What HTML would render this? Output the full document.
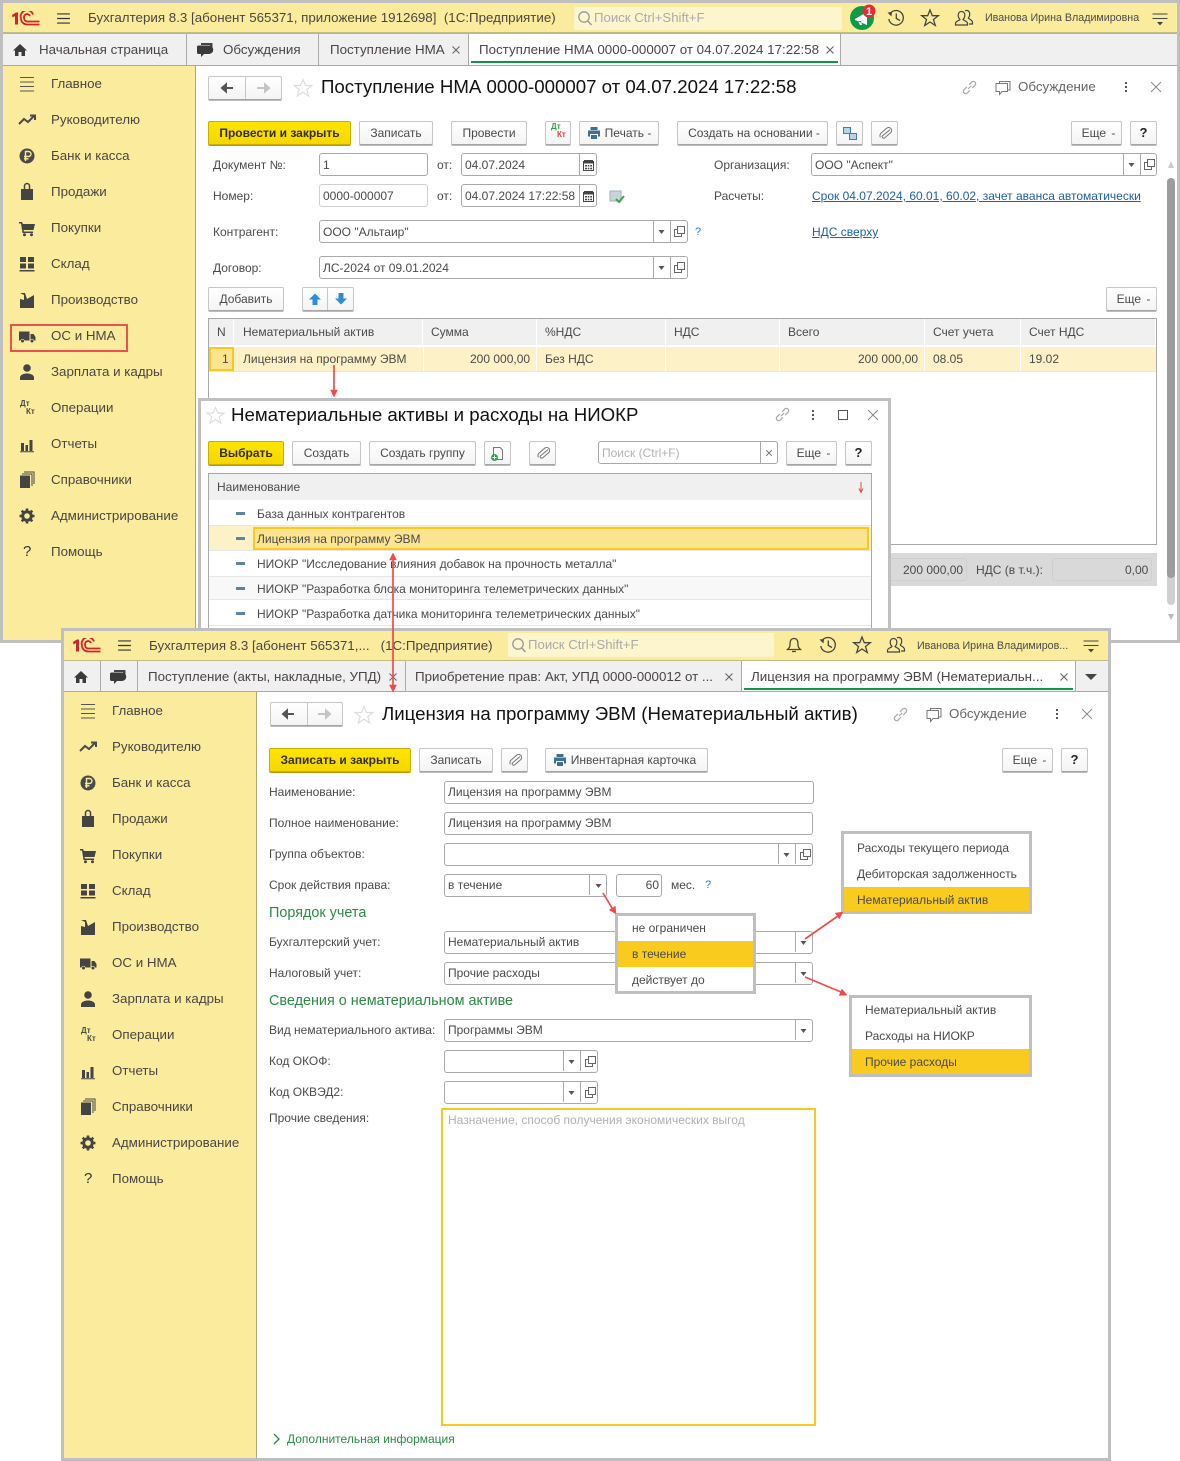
<!DOCTYPE html>
<html lang="ru"><head><meta charset="utf-8"><title>1С</title>
<style>
html,body{margin:0;padding:0;background:#fff}
#p{position:relative;width:1180px;height:1461px;overflow:hidden;font-family:"Liberation Sans",Arial,sans-serif;font-size:12px;color:#4a4a4a}
.l{position:absolute;left:0;top:0;width:1180px;height:1461px;pointer-events:none}
.r{position:absolute;box-sizing:border-box}
.t{position:absolute;white-space:pre;line-height:16px;height:16px}
.h{font-size:13.35px;color:#4a4444}
.ti{font-size:18.67px;color:#111;line-height:24px;height:24px}
.g{font-size:14.4px;color:#2b8a45}
.b{position:absolute;box-sizing:border-box;height:24px;border:1px solid #c6c6c6;border-bottom:1px solid #a5a5a5;border-radius:2px;background:linear-gradient(#fff,#f4f4f4);text-align:center;line-height:22px;color:#4a4a4a;white-space:pre;box-shadow:0 1px 0 #bbb}
.y{background:linear-gradient(#ffe500,#f5d700);border-color:#c9ad00;color:#332f00;font-weight:bold;box-shadow:0 1px 0 #b89e00}
.m{padding-left:4px;word-spacing:2px}
.i{position:absolute;box-sizing:border-box;height:23px;border:1px solid #a9a9a9;border-radius:3px;background:#fff;line-height:21px;padding-left:3px;color:#4a4a4a;white-space:pre}
.j{line-height:23px}
svg.l{overflow:visible}
a{color:#1d5ea8;text-decoration:underline}
</style></head><body><div id="p">
<svg width="0" height="0" style="position:absolute"><defs>
<symbol id="logo" viewBox="0 0 29 15"><path d="M1 4L5 1.500H7V13.500H4V5L1.500 6.500Z" fill="#d1232a"/><path d="M22 3.500A6 6 0 0 0 10 7.500A6 6 0 0 0 16 13.500H28.500" fill="none" stroke="#d1232a" stroke-width="1.800"/><path d="M19 5A3 3 0 0 0 13.200 7.500A3 3 0 0 0 16 10.500H28.500" fill="none" stroke="#d1232a" stroke-width="1.800"/></symbol>
<symbol id="ham" viewBox="0 0 16 12"><path d="M1 1H15M1 6H15M1 11H15" stroke="#333" stroke-width="1.300" fill="none"/></symbol>
<symbol id="m0" viewBox="0 0 20 20"><path d="M3 3.500H17M3 8H17M3 12.500H17M3 17H17" stroke="#555" fill="none"/></symbol>
<symbol id="m1" viewBox="0 0 20 20"><path d="M2 14L7 9L11 12L17 6M13 5.500H18V10" stroke="#4a4a4a" stroke-width="2" fill="none"/></symbol>
<symbol id="m2" viewBox="0 0 20 20"><circle cx="10" cy="10" r="7.500" fill="#4a4a4a"/><path d="M8.500 15V5.500H11.500A2.300 2.300 0 0 1 11.500 10.500H7M7 12.800H11.500" stroke="#fbec9d" stroke-width="1.400" fill="none"/></symbol>
<symbol id="m3" viewBox="0 0 20 20"><path d="M4 7H16V18H4Z" fill="#444"/><path d="M7.500 8V4A2.500 2.500 0 0 1 12.500 4V8" stroke="#444" stroke-width="1.500" fill="none"/></symbol>
<symbol id="m4" viewBox="0 0 20 20"><path d="M2 4H5L6 6H18L16.500 12H6.500L7 13.500H16V15H5.500L4 5.500H2Z" fill="#444"/><circle cx="7.500" cy="16.800" r="1.500" fill="#444"/><circle cx="14.500" cy="16.800" r="1.500" fill="#444"/></symbol>
<symbol id="m5" viewBox="0 0 20 20"><path d="M3 3H9V8H3ZM11 3H17V8H11ZM3 9.500H9V14.500H3ZM11 9.500H17V14.500H11ZM2.500 16H17.500V17.500H2.500Z" fill="#444"/></symbol>
<symbol id="m6" viewBox="0 0 20 20"><path d="M3 18V9L7 10V5L3 3H8L10 9L17 5V18Z" fill="#444"/></symbol>
<symbol id="m7" viewBox="0 0 20 20"><path d="M2 5.500H12.500V14.500H2ZM13.500 8H16.500L18.500 11V14.500H13.500Z" fill="#444"/><circle cx="5.500" cy="15" r="1.800" fill="#444" stroke="#fbec9d" stroke-width="0.600"/><circle cx="15" cy="15" r="1.800" fill="#444" stroke="#fbec9d" stroke-width="0.600"/></symbol>
<symbol id="m8" viewBox="0 0 20 20"><circle cx="10" cy="6" r="3.800" fill="#444"/><path d="M3 18V15.500C3 12.800 7 11.500 10 11.500S17 12.800 17 15.500V18Z" fill="#444"/></symbol>
<symbol id="m10" viewBox="0 0 20 20"><path d="M4 9H7V17H4ZM8.500 11H11V17H8.500ZM12.500 6H15.500V17H12.500ZM3 17.300H17V18.300H3Z" fill="#444"/></symbol>
<symbol id="m11" viewBox="0 0 20 20"><path d="M3 5.500H13V18H3Z" fill="#444"/><path d="M5 4H15V16M7 2H17V14" stroke="#444" fill="none"/></symbol>
<symbol id="m12" viewBox="0 0 20 20"><circle cx="10" cy="10" r="4.300" fill="none" stroke="#444" stroke-width="3"/><path d="M10 2.500V5M10 15V17.500M2.500 10H5M15 10H17.500M4.700 4.700L6.500 6.500M13.500 13.500L15.300 15.300M15.300 4.700L13.500 6.500M6.500 13.500L4.700 15.300" stroke="#444" stroke-width="2.600"/></symbol>
<symbol id="home" viewBox="0 0 16 16"><path d="M8 2L15 8.500H13V14H9.500V10H6.500V14H3V8.500H1Z" fill="#3a3a3a"/></symbol>
<symbol id="bub" viewBox="0 0 18 16"><path d="M5 1H16.500V10H14V3H5Z" fill="#444"/><path d="M2.500 3.500H13A1.500 1.500 0 0 1 13 12H8L5 15V12H2.500A1.500 1.500 0 0 1 1 10.500V5A1.500 1.500 0 0 1 2.500 3.500Z" fill="#3a3a3a"/></symbol>
<symbol id="x" viewBox="0 0 10 10"><path d="M1.500 1.500L8.500 8.500M8.500 1.500L1.500 8.500" stroke="#666" stroke-width="1.100" fill="none"/></symbol>
<symbol id="xl" viewBox="0 0 12 12"><path d="M1 1L11 11M11 1L1 11" stroke="#888" fill="none"/></symbol>
<symbol id="star" viewBox="0 0 20 20"><path d="M10 1.500L12.500 7.500H19L13.800 11.500L15.700 18L10 14.200L4.300 18L6.200 11.500L1 7.500H7.500Z" fill="#fff" stroke="#dedede" stroke-width="1.200"/></symbol>
<symbol id="star2" viewBox="0 0 20 20"><path d="M10 2L12.300 7.700H18.300L13.500 11.500L15.300 17.500L10 14L4.700 17.500L6.500 11.500L1.700 7.700H7.700Z" fill="none" stroke="#444" stroke-width="1.300"/></symbol>
<symbol id="hist" viewBox="0 0 20 20"><path d="M3.500 6.500A7.300 7.300 0 1 1 2.800 11M10.300 5.500V10.500L14 12.500" fill="none" stroke="#444" stroke-width="1.300"/><path d="M1.500 4.500L6 4L5.500 8.500Z" fill="#444"/></symbol>
<symbol id="usr" viewBox="0 0 20 20"><path d="M1.500 17V15.500C1.500 13 5 12.800 6 11.500C4.500 10 4 8.500 4.300 6.500C4.500 4.500 6 3.500 7.500 3.500S10.500 4.500 10.800 6.500C11 8.500 10.500 10 9 11.500C10 12.800 13.500 13 13.500 15.500V17Z" fill="none" stroke="#444" stroke-width="1.200"/><path d="M11 2.800C12 2.300 14.500 2 15.500 4.500C16 6.500 15.500 8.500 14.300 10C15.300 11.300 18.500 12 18.500 14.500V16H15" fill="none" stroke="#444" stroke-width="1.200"/></symbol>
<symbol id="hamt" viewBox="0 0 16 14"><path d="M0.500 1H15.500M0.500 5.500H15.500" stroke="#444" fill="none"/><path d="M5 9H11L8 12.500Z" fill="#444"/></symbol>
<symbol id="link" viewBox="0 0 16 16"><path d="M6.500 9.500L9.500 6.500M5.500 7.500L2.500 10.500A2.200 2.200 0 0 0 5.500 13.500L8.500 10.500M7.500 5.500L10.500 2.500A2.200 2.200 0 0 1 13.500 5.500L10.500 8.500" fill="none" stroke="#a9a9a9" stroke-width="1.100"/></symbol>
<symbol id="chat" viewBox="0 0 16 16"><path d="M4.500 3V1.500H15V10H12.500" fill="none" stroke="#777"/><path d="M1 3.500H12.500V11.500H7L4.500 14.500V11.500H1Z" fill="#fff" stroke="#777"/></symbol>
<symbol id="dots" viewBox="0 0 4 12"><path d="M1 1H3V3H1ZM1 5H3V7H1ZM1 9H3V11H1Z" fill="#555"/></symbol>
<symbol id="print" viewBox="0 0 14 14"><path d="M3.500 1H10.500V4H3.500ZM1 4.500H13V10.500H11V8H3V10.500H1ZM4 9H10V13H4Z" fill="#3f6f95"/></symbol>
<symbol id="clip" viewBox="0 0 14 14"><path d="M11.500 3L5 10A1.500 1.500 0 0 0 7.200 12L12.500 6A3 3 0 0 0 8 2L2.800 8A4 4 0 0 0 3 12" fill="none" stroke="#777" transform="rotate(8 7 7)"/></symbol>
<symbol id="tri" viewBox="0 0 7 4"><path d="M0.500 0H6.500L3.500 4Z" fill="#555"/></symbol>
<symbol id="copy" viewBox="0 0 11 11"><path d="M3.500 0.500H10.500V7.500H3.500Z" fill="#fff" stroke="#666"/><path d="M3.500 3.500H0.500V10.500H7.500V7.500" fill="none" stroke="#666"/></symbol>
<symbol id="cal" viewBox="0 0 11 12"><path d="M0.500 2.500H10.500V11.500H0.500Z" fill="#fff" stroke="#444"/><path d="M1 1H10V4.500H1Z" fill="#444"/><path d="M2 6H4V7.500H2ZM4.800 6H6.300V7.500H4.800ZM7.200 6H9V7.500H7.200ZM2 8.800H4V10.300H2ZM4.800 8.800H6.300V10.300H4.800ZM7.200 8.800H9V10.300H7.200Z" fill="#444"/></symbol>
<symbol id="mag" viewBox="0 0 16 16"><circle cx="7" cy="7" r="5.200" fill="none" stroke="#999" stroke-width="1.300"/><path d="M10.800 11L14.500 15" stroke="#999" stroke-width="1.500"/></symbol>
<symbol id="bell" viewBox="0 0 18 18"><path d="M9 2.500C5.500 2.500 5 5.500 5 9C5 11.500 3.500 12.500 2.500 13.500H15.500C14.500 12.500 13 11.500 13 9C13 5.500 12.500 2.500 9 2.500ZM7 15.500H11" fill="none" stroke="#444" stroke-width="1.300"/></symbol>
<symbol id="up" viewBox="0 0 14 14"><path d="M7 1.500L13 7.500H9.500V13H4.500V7.500H1Z" fill="#2c8fd6"/></symbol>
<symbol id="dn" viewBox="0 0 14 14"><path d="M7 12.500L13 6.500H9.500V1H4.500V6.500H1Z" fill="#2c8fd6"/></symbol>
<symbol id="dash" viewBox="0 0 9 3"><path d="M0 0H9V3H0Z" fill="#5a83a5"/></symbol>
</defs></svg>

<!-- WINDOW 1 -->
<div class="r" style="left:0;top:0;width:1180px;height:643px;border:3px solid #bfbfbf;background:#fff"></div>
<div class="r" style="left:3px;top:3px;width:1174px;height:30px;background:#fbec9d;border-bottom:1px solid #c3bb86"></div>
<div class="r" style="left:3px;top:33px;width:1174px;height:33px;background:#f0f0f0;border-bottom:1px solid #a9a9a9;border-top:1px solid #b5b5a5"></div>
<div class="r" style="left:468px;top:34px;width:373px;height:31px;background:#fff;border-left:1px solid #aaa;border-right:1px solid #aaa"></div>
<div class="r" style="left:186px;top:34px;width:1px;height:31px;background:#aaa"></div>
<div class="r" style="left:318px;top:34px;width:1px;height:31px;background:#aaa"></div>
<div class="r" style="left:471px;top:61px;width:367px;height:2px;background:#0d9747"></div>
<div class="r" style="left:3px;top:66px;width:193px;height:574px;background:#fbec9d;border-right:1px solid #aea679"></div>
<div class="r" style="left:574px;top:7px;width:268px;height:23px;background:#fdf5cd;border-radius:2px"></div>
<span class="t h" style="left:88px;top:10px">Бухгалтерия 8.3 [абонент 565371, приложение 1912698]  (1С:Предприятие)</span>
<span class="t" style="left:594px;top:10px;font-size:13.2px;color:#a9a9a9">Поиск Ctrl+Shift+F</span>
<span class="t" style="left:985px;top:10px;font-size:10.7px">Иванова Ирина Владимировна</span>
<span class="t h" style="left:39px;top:42px">Начальная страница</span>
<span class="t h" style="left:223px;top:42px">Обсуждения</span>
<span class="t h" style="left:330px;top:42px">Поступление НМА</span>
<span class="t h" style="left:479px;top:42px">Поступление НМА 0000-000007 от 04.07.2024 17:22:58</span>
<span class="t h" style="left:51px;top:76px">Главное</span>
<span class="t h" style="left:51px;top:112px">Руководителю</span>
<span class="t h" style="left:51px;top:148px">Банк и касса</span>
<span class="t h" style="left:51px;top:184px">Продажи</span>
<span class="t h" style="left:51px;top:220px">Покупки</span>
<span class="t h" style="left:51px;top:256px">Склад</span>
<span class="t h" style="left:51px;top:292px">Производство</span>
<span class="t h" style="left:51px;top:328px">ОС и НМА</span>
<span class="t h" style="left:51px;top:364px">Зарплата и кадры</span>
<span class="t h" style="left:51px;top:400px">Операции</span>
<span class="t h" style="left:51px;top:436px">Отчеты</span>
<span class="t h" style="left:51px;top:472px">Справочники</span>
<span class="t h" style="left:51px;top:508px">Администрирование</span>
<span class="t h" style="left:51px;top:544px">Помощь</span>
<span class="t" style="left:20px;top:399px;font-size:8px;font-weight:bold;line-height:10px;height:10px">Дт</span>
<span class="t" style="left:26px;top:407px;font-size:8px;font-weight:bold;line-height:10px;height:10px">Кт</span>
<span class="t" style="left:23px;top:544px;font-size:15px;color:#333">?</span>
<div class="r" style="left:10px;top:324px;width:118px;height:28px;border:2px solid #ee4f4f"></div>
<div class="b" style="left:208px;top:76px;width:74px;height:24px"></div>
<div class="r" style="left:245px;top:77px;width:1px;height:22px;background:#c6c6c6"></div>
<span class="t ti" style="left:321px;top:75px">Поступление НМА 0000-000007 от 04.07.2024 17:22:58</span>
<span class="t h" style="left:1018px;top:79px;color:#666">Обсуждение</span>
<div class="b y" style="left:208px;top:121px;width:143px">Провести и закрыть</div>
<div class="b" style="left:359px;top:121px;width:74px">Записать</div>
<div class="b" style="left:451px;top:121px;width:76px">Провести</div>
<div class="b" style="left:545px;top:121px;width:26px"></div>
<span class="t" style="left:551px;top:122px;font-size:8px;font-weight:bold;color:#2fa34d;line-height:10px;height:10px">Дт</span>
<span class="t" style="left:557px;top:130px;font-size:8px;font-weight:bold;color:#e34040;line-height:10px;height:10px">Кт</span>
<div class="b" style="left:579px;top:121px;width:80px;padding-left:18px">Печать -</div>
<div class="b" style="left:677px;top:121px;width:151px;padding-left:3px">Создать на основании -</div>
<div class="b" style="left:836px;top:121px;width:27px"></div>
<div class="b" style="left:871px;top:121px;width:27px"></div>
<div class="b m" style="left:1071px;top:121px;width:51px">Еще -</div>
<div class="b" style="left:1130px;top:121px;width:27px;font-weight:bold;font-size:13px;color:#222">?</div>
<span class="t" style="left:213px;top:157px">Документ №:</span>
<div class="i j" style="left:319px;top:153px;width:109px">1</div>
<span class="t" style="left:437px;top:157px">от:</span>
<div class="i j" style="left:461px;top:153px;width:136px">04.07.2024</div>
<span class="t" style="left:714px;top:157px">Организация:</span>
<div class="i j" style="left:811px;top:153px;width:346px">ООО "Аспект"</div>
<span class="t" style="left:213px;top:188px">Номер:</span>
<div class="i j" style="left:319px;top:184px;width:109px;border-color:#d0d0d0">0000-000007</div>
<span class="t" style="left:437px;top:188px">от:</span>
<div class="i j" style="left:461px;top:184px;width:136px">04.07.2024 17:22:58</div>
<span class="t" style="left:714px;top:188px">Расчеты:</span>
<a class="t" style="left:812px;top:188px">Срок 04.07.2024, 60.01, 60.02, зачет аванса автоматически</a>
<span class="t" style="left:213px;top:224px">Контрагент:</span>
<div class="i j" style="left:319px;top:220px;width:369px">ООО "Альтаир"</div>
<span class="t" style="left:695px;top:224px;color:#1a7fc9;font-size:11px">?</span>
<a class="t" style="left:812px;top:224px">НДС сверху</a>
<span class="t" style="left:213px;top:260px">Договор:</span>
<div class="i j" style="left:319px;top:256px;width:369px">ЛС-2024 от 09.01.2024</div>
<div class="b" style="left:208px;top:287px;width:76px">Добавить</div>
<div class="b" style="left:302px;top:287px;width:52px"></div>
<div class="r" style="left:327px;top:288px;width:1px;height:22px;background:#c6c6c6"></div>
<div class="b m" style="left:1106px;top:287px;width:51px">Еще -</div>
<!-- table -->
<div class="r" style="left:208px;top:318px;width:949px;height:227px;border:1px solid #a9a9a9;background:#fff"></div>
<div class="r" style="left:209px;top:319px;width:24px;height:26px;background:#f0f0f0"></div>
<div class="r" style="left:234px;top:319px;width:188px;height:26px;background:#f0f0f0"></div>
<div class="r" style="left:423px;top:319px;width:113px;height:26px;background:#f0f0f0"></div>
<div class="r" style="left:537px;top:319px;width:128px;height:26px;background:#f0f0f0"></div>
<div class="r" style="left:666px;top:319px;width:113px;height:26px;background:#f0f0f0"></div>
<div class="r" style="left:780px;top:319px;width:144px;height:26px;background:#f0f0f0"></div>
<div class="r" style="left:925px;top:319px;width:95px;height:26px;background:#f0f0f0"></div>
<div class="r" style="left:1021px;top:319px;width:134px;height:26px;background:#f0f0f0"></div>
<div class="r" style="left:209px;top:347px;width:947px;height:24px;background:#fdf1c7"></div>
<div class="r" style="left:209px;top:371px;width:947px;height:1px;background:#e6e6e6"></div>
<div class="r" style="left:423px;top:347px;width:1px;height:24px;background:#fff"></div>
<div class="r" style="left:536px;top:347px;width:1px;height:24px;background:#fff"></div>
<div class="r" style="left:665px;top:347px;width:1px;height:24px;background:#fff"></div>
<div class="r" style="left:779px;top:347px;width:1px;height:24px;background:#fff"></div>
<div class="r" style="left:924px;top:347px;width:1px;height:24px;background:#fff"></div>
<div class="r" style="left:1020px;top:347px;width:1px;height:24px;background:#fff"></div>
<div class="r" style="left:209px;top:347px;width:25px;height:24px;background:#fbe48f;border:2px solid #f9c91e"></div>
<span class="t" style="left:217px;top:324px">N</span>
<span class="t" style="left:243px;top:324px">Нематериальный актив</span>
<span class="t" style="left:431px;top:324px">Сумма</span>
<span class="t" style="left:545px;top:324px">%НДС</span>
<span class="t" style="left:674px;top:324px">НДС</span>
<span class="t" style="left:788px;top:324px">Всего</span>
<span class="t" style="left:933px;top:324px">Счет учета</span>
<span class="t" style="left:1029px;top:324px">Счет НДС</span>
<span class="t" style="left:222px;top:351px">1</span>
<span class="t" style="left:243px;top:351px">Лицензия на программу ЭВМ</span>
<span class="t" style="left:470px;top:351px">200 000,00</span>
<span class="t" style="left:545px;top:351px">Без НДС</span>
<span class="t" style="left:858px;top:351px">200 000,00</span>
<span class="t" style="left:933px;top:351px">08.05</span>
<span class="t" style="left:1029px;top:351px">19.02</span>
<div class="r" style="left:880px;top:553px;width:277px;height:33px;background:#d9d9d9"></div>
<div class="r" style="left:880px;top:558px;width:87px;height:23px;border:1px solid #cfcfcf;border-radius:3px;background:#d9d9d9"></div>
<div class="r" style="left:1052px;top:558px;width:100px;height:23px;border:1px solid #cfcfcf;border-radius:3px;background:#d9d9d9"></div>
<span class="t" style="left:903px;top:562px">200 000,00</span>
<span class="t" style="left:976px;top:562px">НДС (в т.ч.):</span>
<span class="t" style="left:1125px;top:562px">0,00</span>
<div class="r" style="left:1167px;top:178px;width:8px;height:427px;background:#d0d0d0;border-radius:4px"></div>
<div class="r" style="left:1167px;top:178px;width:8px;height:400px;background:#9c9c9c;border-radius:4px"></div>
<svg class="l" viewBox="0 0 1180 1461">
<use href="#logo" x="11" y="11" width="29" height="15"/>
<use href="#ham" x="56" y="13" width="15" height="11"/>
<use href="#mag" x="577" y="10" width="16" height="16"/>
<circle cx="862" cy="18" r="12" fill="#0f9a48"/>
<path d="M855 19L867 12V25L855 20ZM858 21L860 25H862L861 21Z" fill="#fff"/>
<circle cx="869" cy="11" r="6.500" fill="#ea2a32"/>
<text x="869" y="15" font-size="11" font-weight="bold" fill="#fff" text-anchor="middle" font-family="Liberation Sans">1</text>
<use href="#hist" x="886" y="8" width="20" height="20"/>
<use href="#star2" x="920" y="8" width="20" height="20"/>
<use href="#usr" x="954" y="8" width="20" height="20"/>
<use href="#hamt" x="1152" y="13" width="16" height="14"/>
<use href="#home" x="12" y="42" width="16" height="16"/>
<use href="#bub" x="196" y="42" width="18" height="16"/>
<use href="#x" x="451" y="45" width="10" height="10"/>
<use href="#x" x="825" y="45" width="10" height="10"/>
<use href="#m0" x="17" y="74" width="20" height="20"/>
<use href="#m1" x="17" y="110" width="20" height="20"/>
<use href="#m2" x="17" y="146" width="20" height="20"/>
<use href="#m3" x="17" y="182" width="20" height="20"/>
<use href="#m4" x="17" y="218" width="20" height="20"/>
<use href="#m5" x="17" y="254" width="20" height="20"/>
<use href="#m6" x="17" y="290" width="20" height="20"/>
<use href="#m7" x="17" y="326" width="20" height="20"/>
<use href="#m8" x="17" y="362" width="20" height="20"/>
<use href="#m10" x="17" y="434" width="20" height="20"/>
<use href="#m11" x="17" y="470" width="20" height="20"/>
<use href="#m12" x="17" y="506" width="20" height="20"/>
<path d="M222 88H233M222 88L226 84.500V91.500Z" stroke="#555" stroke-width="2" fill="#555"/>
<path d="M269 88H257M269 88L265 84.500V91.500Z" stroke="#c4c4c4" stroke-width="2" fill="#c4c4c4"/>
<use href="#star" x="293" y="78" width="20" height="20"/>
<use href="#link" x="961" y="79" width="17" height="17"/>
<use href="#chat" x="995" y="80" width="16" height="16"/>
<use href="#dots" x="1124" y="81" width="4" height="12"/>
<use href="#xl" x="1150" y="81" width="12" height="12"/>
<use href="#print" x="587" y="126" width="14" height="14"/>
<path d="M843.500 127.500H850.500V133.500H843.500ZM849.500 133.500H856.500V139.500H849.500Z" fill="#b9d3e6" stroke="#3f7fa8"/>
<use href="#clip" x="878" y="126" width="14" height="14"/>
<path d="M579.500 154V175M1123.500 154V175M1140.500 154V175M579.500 185V206M653.500 221V242M670.500 221V242M653.500 257V278M670.500 257V278" stroke="#a9a9a9"/>
<use href="#cal" x="583" y="159" width="11" height="12"/>
<use href="#cal" x="583" y="190" width="11" height="12"/>
<use href="#tri" x="1128" y="163" width="7" height="4"/>
<use href="#copy" x="1144" y="159" width="11" height="11"/>
<use href="#tri" x="658" y="230" width="7" height="4"/>
<use href="#copy" x="674" y="226" width="11" height="11"/>
<use href="#tri" x="658" y="266" width="7" height="4"/>
<use href="#copy" x="674" y="262" width="11" height="11"/>
<path d="M610 191H621V201H610Z" fill="#c9d4da" stroke="#9fb0ba"/>
<path d="M616 199L619 202L624 196" stroke="#3aa84a" stroke-width="2" fill="none"/>
<use href="#up" x="308" y="292" width="14" height="14"/>
<use href="#dn" x="334" y="292" width="14" height="14"/>
<path d="M1168 168L1171 161L1174 168Z" fill="#ccc"/>
<path d="M1168 614L1174 614L1171 620Z" fill="#bbb"/>
</svg>

<!-- DIALOG -->
<div class="r" style="left:198px;top:398px;width:693px;height:240px;border:3px solid #bfbfbf;background:#fff"></div>
<span class="t ti" style="left:231px;top:403px">Нематериальные активы и расходы на НИОКР</span>
<div class="b y" style="left:208px;top:441px;width:76px">Выбрать</div>
<div class="b" style="left:292px;top:441px;width:69px">Создать</div>
<div class="b" style="left:369px;top:441px;width:107px">Создать группу</div>
<div class="b" style="left:484px;top:441px;width:27px"></div>
<div class="b" style="left:529px;top:441px;width:27px"></div>
<div class="i j" style="left:598px;top:441px;width:180px;color:#b3b3b3">Поиск (Ctrl+F)</div>
<div class="b m" style="left:786px;top:441px;width:51px">Еще -</div>
<div class="b" style="left:845px;top:441px;width:27px;font-weight:bold;font-size:13px;color:#222">?</div>
<div class="r" style="left:208px;top:473px;width:664px;height:170px;border:1px solid #a9a9a9;background:#fff"></div>
<div class="r" style="left:209px;top:474px;width:662px;height:26px;background:#f0f0f0;border-bottom:0"></div>
<div class="r" style="left:209px;top:525px;width:662px;height:1px;background:#e6e6e6"></div>
<div class="r" style="left:209px;top:526px;width:662px;height:24px;background:#fdf1c7"></div>
<div class="r" style="left:253px;top:527px;width:616px;height:23px;background:#fbe48f;border:2px solid #f9c91e"></div>
<div class="r" style="left:209px;top:550px;width:662px;height:1px;background:#e6e6e6"></div>
<div class="r" style="left:209px;top:576px;width:662px;height:24px;background:#f8f8f8;border-top:1px solid #e6e6e6;border-bottom:1px solid #e6e6e6"></div>
<div class="r" style="left:209px;top:625px;width:662px;height:1px;background:#e6e6e6"></div>
<span class="t" style="left:217px;top:479px">Наименование</span>
<span class="t" style="left:257px;top:506px">База данных контрагентов</span>
<span class="t" style="left:257px;top:531px">Лицензия на программу ЭВМ</span>
<span class="t" style="left:257px;top:556px">НИОКР "Исследование влияния добавок на прочность металла"</span>
<span class="t" style="left:257px;top:581px">НИОКР "Разработка блока мониторинга телеметрических данных"</span>
<span class="t" style="left:257px;top:606px">НИОКР "Разработка датчика мониторинга телеметрических данных"</span>
<svg class="l" viewBox="0 0 1180 1461">
<use href="#star" x="206" y="406" width="19" height="19"/>
<use href="#link" x="774" y="406" width="17" height="17"/>
<use href="#dots" x="811" y="409" width="4" height="12"/>
<path d="M838.500 410.500H847.500V419.500H838.500Z" fill="none" stroke="#555"/>
<use href="#xl" x="867" y="409" width="12" height="12"/>
<path d="M493.500 447.500H500L502.500 450V459.500H493.500Z" fill="#fff" stroke="#777"/>
<circle cx="494.500" cy="457.500" r="3.500" fill="#2ea34a"/><path d="M492.500 457.500H496.500M494.500 455.500V459.500" stroke="#fff"/>
<use href="#clip" x="536" y="446" width="14" height="14"/>
<path d="M760.500 442V463" stroke="#a9a9a9"/>
<use href="#x" x="765" y="449" width="8" height="8"/>
<path d="M861 482V491M859 488.500L861 492.500L863 488.500" stroke="#d9552e" fill="none" stroke-width="1"/>
<use href="#dash" x="236" y="512" width="9" height="3"/>
<use href="#dash" x="236" y="537" width="9" height="3"/>
<use href="#dash" x="236" y="562" width="9" height="3"/>
<use href="#dash" x="236" y="587" width="9" height="3"/>
<use href="#dash" x="236" y="612" width="9" height="3"/>
</svg>

<!-- WINDOW 2 -->
<div class="r" style="left:61px;top:628px;width:1050px;height:833px;border:3px solid #bfbfbf;background:#fff"></div>
<div class="r" style="left:64px;top:631px;width:1044px;height:30px;background:#fbec9d;border-bottom:1px solid #c3bb86"></div>
<div class="r" style="left:64px;top:661px;width:1044px;height:31px;background:#f0f0f0;border-bottom:1px solid #a9a9a9"></div>
<div class="r" style="left:741px;top:661px;width:335px;height:30px;background:#fff;border-left:1px solid #aaa;border-right:1px solid #aaa"></div>
<div class="r" style="left:100px;top:661px;width:1px;height:30px;background:#aaa"></div>
<div class="r" style="left:137px;top:661px;width:1px;height:30px;background:#aaa"></div>
<div class="r" style="left:405px;top:661px;width:1px;height:30px;background:#aaa"></div>
<div class="r" style="left:744px;top:688px;width:329px;height:2px;background:#0d9747"></div>
<div class="r" style="left:64px;top:692px;width:193px;height:766px;background:#fbec9d;border-right:1px solid #aea679"></div>
<div class="r" style="left:508px;top:633px;width:266px;height:24px;background:#fdf5cd;border-radius:2px"></div>
<span class="t h" style="left:149px;top:638px">Бухгалтерия 8.3 [абонент 565371,...   (1С:Предприятие)</span>
<span class="t" style="left:528px;top:637px;font-size:13.2px;color:#a9a9a9">Поиск Ctrl+Shift+F</span>
<span class="t" style="left:917px;top:638px;font-size:10.7px">Иванова Ирина Владимиров...</span>
<span class="t h" style="left:148px;top:669px">Поступление (акты, накладные, УПД)</span>
<span class="t h" style="left:415px;top:669px">Приобретение прав: Акт, УПД 0000-000012 от ...</span>
<span class="t h" style="left:751px;top:669px">Лицензия на программу ЭВМ (Нематериальн...</span>
<span class="t h" style="left:112px;top:703px">Главное</span>
<span class="t h" style="left:112px;top:739px">Руководителю</span>
<span class="t h" style="left:112px;top:775px">Банк и касса</span>
<span class="t h" style="left:112px;top:811px">Продажи</span>
<span class="t h" style="left:112px;top:847px">Покупки</span>
<span class="t h" style="left:112px;top:883px">Склад</span>
<span class="t h" style="left:112px;top:919px">Производство</span>
<span class="t h" style="left:112px;top:955px">ОС и НМА</span>
<span class="t h" style="left:112px;top:991px">Зарплата и кадры</span>
<span class="t h" style="left:112px;top:1027px">Операции</span>
<span class="t h" style="left:112px;top:1063px">Отчеты</span>
<span class="t h" style="left:112px;top:1099px">Справочники</span>
<span class="t h" style="left:112px;top:1135px">Администрирование</span>
<span class="t h" style="left:112px;top:1171px">Помощь</span>
<span class="t" style="left:81px;top:1026px;font-size:8px;font-weight:bold;line-height:10px;height:10px">Дт</span>
<span class="t" style="left:87px;top:1034px;font-size:8px;font-weight:bold;line-height:10px;height:10px">Кт</span>
<span class="t" style="left:84px;top:1171px;font-size:15px;color:#333">?</span>
<div class="b" style="left:270px;top:702px;width:73px"></div>
<div class="r" style="left:307px;top:703px;width:1px;height:22px;background:#c6c6c6"></div>
<span class="t ti" style="left:382px;top:702px">Лицензия на программу ЭВМ (Нематериальный актив)</span>
<span class="t h" style="left:949px;top:706px;color:#666">Обсуждение</span>
<div class="b y" style="left:269px;top:748px;width:142px">Записать и закрыть</div>
<div class="b" style="left:419px;top:748px;width:74px">Записать</div>
<div class="b" style="left:501px;top:748px;width:27px"></div>
<div class="b" style="left:545px;top:748px;width:163px;padding-left:14px">Инвентарная карточка</div>
<div class="b m" style="left:1002px;top:748px;width:51px">Еще -</div>
<div class="b" style="left:1061px;top:748px;width:27px;font-weight:bold;font-size:13px;color:#222">?</div>
<span class="t" style="left:269px;top:784px">Наименование:</span>
<div class="i" style="left:444px;top:781px;width:370px">Лицензия на программу ЭВМ</div>
<span class="t" style="left:269px;top:815px">Полное наименование:</span>
<div class="i" style="left:444px;top:812px;width:369px">Лицензия на программу ЭВМ</div>
<span class="t" style="left:269px;top:846px">Группа объектов:</span>
<div class="i" style="left:444px;top:843px;width:369px"></div>
<span class="t" style="left:269px;top:877px">Срок действия права:</span>
<div class="i" style="left:444px;top:874px;width:163px">в течение</div>
<div class="i" style="left:616px;top:874px;width:46px;text-align:right;padding-right:2px;padding-left:0">60</div>
<span class="t" style="left:671px;top:877px">мес.</span>
<span class="t" style="left:705px;top:877px;color:#1a7fc9;font-size:11px">?</span>
<span class="t g" style="left:269px;top:905px">Порядок учета</span>
<span class="t" style="left:269px;top:934px">Бухгалтерский учет:</span>
<div class="i" style="left:444px;top:931px;width:369px">Нематериальный актив</div>
<span class="t" style="left:269px;top:965px">Налоговый учет:</span>
<div class="i" style="left:444px;top:962px;width:369px">Прочие расходы</div>
<span class="t g" style="left:269px;top:993px">Сведения о нематериальном активе</span>
<span class="t" style="left:269px;top:1022px">Вид нематериального актива:</span>
<div class="i" style="left:444px;top:1019px;width:369px">Программы ЭВМ</div>
<span class="t" style="left:269px;top:1053px">Код ОКОФ:</span>
<div class="i" style="left:444px;top:1050px;width:154px"></div>
<span class="t" style="left:269px;top:1084px">Код ОКВЭД2:</span>
<div class="i" style="left:444px;top:1081px;width:154px"></div>
<span class="t" style="left:269px;top:1110px">Прочие сведения:</span>
<div class="r" style="left:441px;top:1108px;width:375px;height:318px;border:2px solid #f9c91e;background:#fff"></div>
<span class="t" style="left:448px;top:1112px;color:#b0b0b0">Назначение, способ получения экономических выгод</span>
<span class="t" style="left:287px;top:1431px;color:#2b8a45">Дополнительная информация</span>
<svg class="l" viewBox="0 0 1180 1461">
<use href="#logo" x="72" y="638" width="29" height="15"/>
<use href="#ham" x="117" y="640" width="15" height="11"/>
<use href="#mag" x="511" y="637" width="16" height="16"/>
<use href="#bell" x="785" y="636" width="18" height="18"/>
<use href="#hist" x="818" y="635" width="20" height="20"/>
<use href="#star2" x="852" y="635" width="20" height="20"/>
<use href="#usr" x="886" y="635" width="20" height="20"/>
<use href="#hamt" x="1083" y="640" width="16" height="14"/>
<use href="#home" x="73" y="669" width="16" height="16"/>
<use href="#bub" x="109" y="669" width="18" height="16"/>
<use href="#x" x="388" y="672" width="10" height="10"/>
<use href="#x" x="724" y="672" width="10" height="10"/>
<use href="#x" x="1059" y="672" width="10" height="10"/>
<path d="M1085 674H1097L1091 680Z" fill="#444"/>
<use href="#m0" x="78" y="701" width="20" height="20"/>
<use href="#m1" x="78" y="737" width="20" height="20"/>
<use href="#m2" x="78" y="773" width="20" height="20"/>
<use href="#m3" x="78" y="809" width="20" height="20"/>
<use href="#m4" x="78" y="845" width="20" height="20"/>
<use href="#m5" x="78" y="881" width="20" height="20"/>
<use href="#m6" x="78" y="917" width="20" height="20"/>
<use href="#m7" x="78" y="953" width="20" height="20"/>
<use href="#m8" x="78" y="989" width="20" height="20"/>
<use href="#m10" x="78" y="1061" width="20" height="20"/>
<use href="#m11" x="78" y="1097" width="20" height="20"/>
<use href="#m12" x="78" y="1133" width="20" height="20"/>
<path d="M283 714H294M283 714L287 710.500V717.500Z" stroke="#555" stroke-width="2" fill="#555"/>
<path d="M330 714H318M330 714L326 710.500V717.500Z" stroke="#c4c4c4" stroke-width="2" fill="#c4c4c4"/>
<use href="#star" x="354" y="705" width="20" height="20"/>
<use href="#link" x="892" y="706" width="17" height="17"/>
<use href="#chat" x="926" y="707" width="16" height="16"/>
<use href="#dots" x="1055" y="708" width="4" height="12"/>
<use href="#xl" x="1081" y="708" width="12" height="12"/>
<use href="#clip" x="508" y="753" width="14" height="14"/>
<use href="#print" x="553" y="753" width="14" height="14"/>
<path d="M778.500 844V864M795.500 844V864M589.500 875V895M795.500 932V952M795.500 963V983M795.500 1020V1040M563.500 1051V1071M580.500 1051V1071M563.500 1082V1102M580.500 1082V1102" stroke="#a9a9a9"/>
<use href="#tri" x="783" y="853" width="7" height="4"/>
<use href="#copy" x="800" y="849" width="11" height="11"/>
<use href="#tri" x="595" y="884" width="7" height="4"/>
<use href="#tri" x="800" y="941" width="7" height="4"/>
<use href="#tri" x="800" y="972" width="7" height="4"/>
<use href="#tri" x="800" y="1029" width="7" height="4"/>
<use href="#tri" x="568" y="1060" width="7" height="4"/>
<use href="#copy" x="585" y="1056" width="11" height="11"/>
<use href="#tri" x="568" y="1091" width="7" height="4"/>
<use href="#copy" x="585" y="1087" width="11" height="11"/>
<path d="M274 1434L279 1439L274 1444" stroke="#2b8a45" fill="none" stroke-width="1.300"/>
</svg>

<!-- POPUPS -->
<div class="r" style="left:615px;top:913px;width:141px;height:81px;border:3px solid #bfbfbf;background:#fff"></div>
<div class="r" style="left:618px;top:941px;width:135px;height:26px;background:#f9cb1f"></div>
<span class="t" style="left:632px;top:920px">не ограничен</span>
<span class="t" style="left:632px;top:946px">в течение</span>
<span class="t" style="left:632px;top:972px">действует до</span>
<div class="r" style="left:841px;top:831px;width:191px;height:83px;border:3px solid #bfbfbf;background:#fff"></div>
<div class="r" style="left:844px;top:887px;width:185px;height:24px;background:#f9cb1f"></div>
<span class="t" style="left:857px;top:840px">Расходы текущего периода</span>
<span class="t" style="left:857px;top:866px">Дебиторская задолженность</span>
<span class="t" style="left:857px;top:892px">Нематериальный актив</span>
<div class="r" style="left:849px;top:995px;width:183px;height:82px;border:3px solid #bfbfbf;background:#fff"></div>
<div class="r" style="left:852px;top:1049px;width:177px;height:25px;background:#f9cb1f"></div>
<span class="t" style="left:865px;top:1002px">Нематериальный актив</span>
<span class="t" style="left:865px;top:1028px">Расходы на НИОКР</span>
<span class="t" style="left:865px;top:1054px">Прочие расходы</span>

<!-- ARROWS -->
<svg class="l" viewBox="0 0 1180 1461">
<g stroke="#f24a4a" fill="#f24a4a" stroke-width="1.700">
<path d="M334 365V392"/><path d="M330.500 390H337.500L334 397Z" stroke-width="0.500"/>
<path d="M393 558V686"/><path d="M389.500 560H396.500L393 553Z" stroke-width="0.500"/><path d="M389.500 685H396.500L393 692Z" stroke-width="0.500"/>
<path d="M603 893L612 908"/><path d="M615.300 906.100L609.300 909.900L616 914Z" stroke-width="0.500"/>
<path d="M805 939L838 916"/><path d="M839.300 918.900L835.300 913.100L843 912Z" stroke-width="0.500"/>
<path d="M805 977L841 992"/><path d="M842 989L839.200 995.500L847 995Z" stroke-width="0.500"/>
</g>
</svg>
</div></body></html>
